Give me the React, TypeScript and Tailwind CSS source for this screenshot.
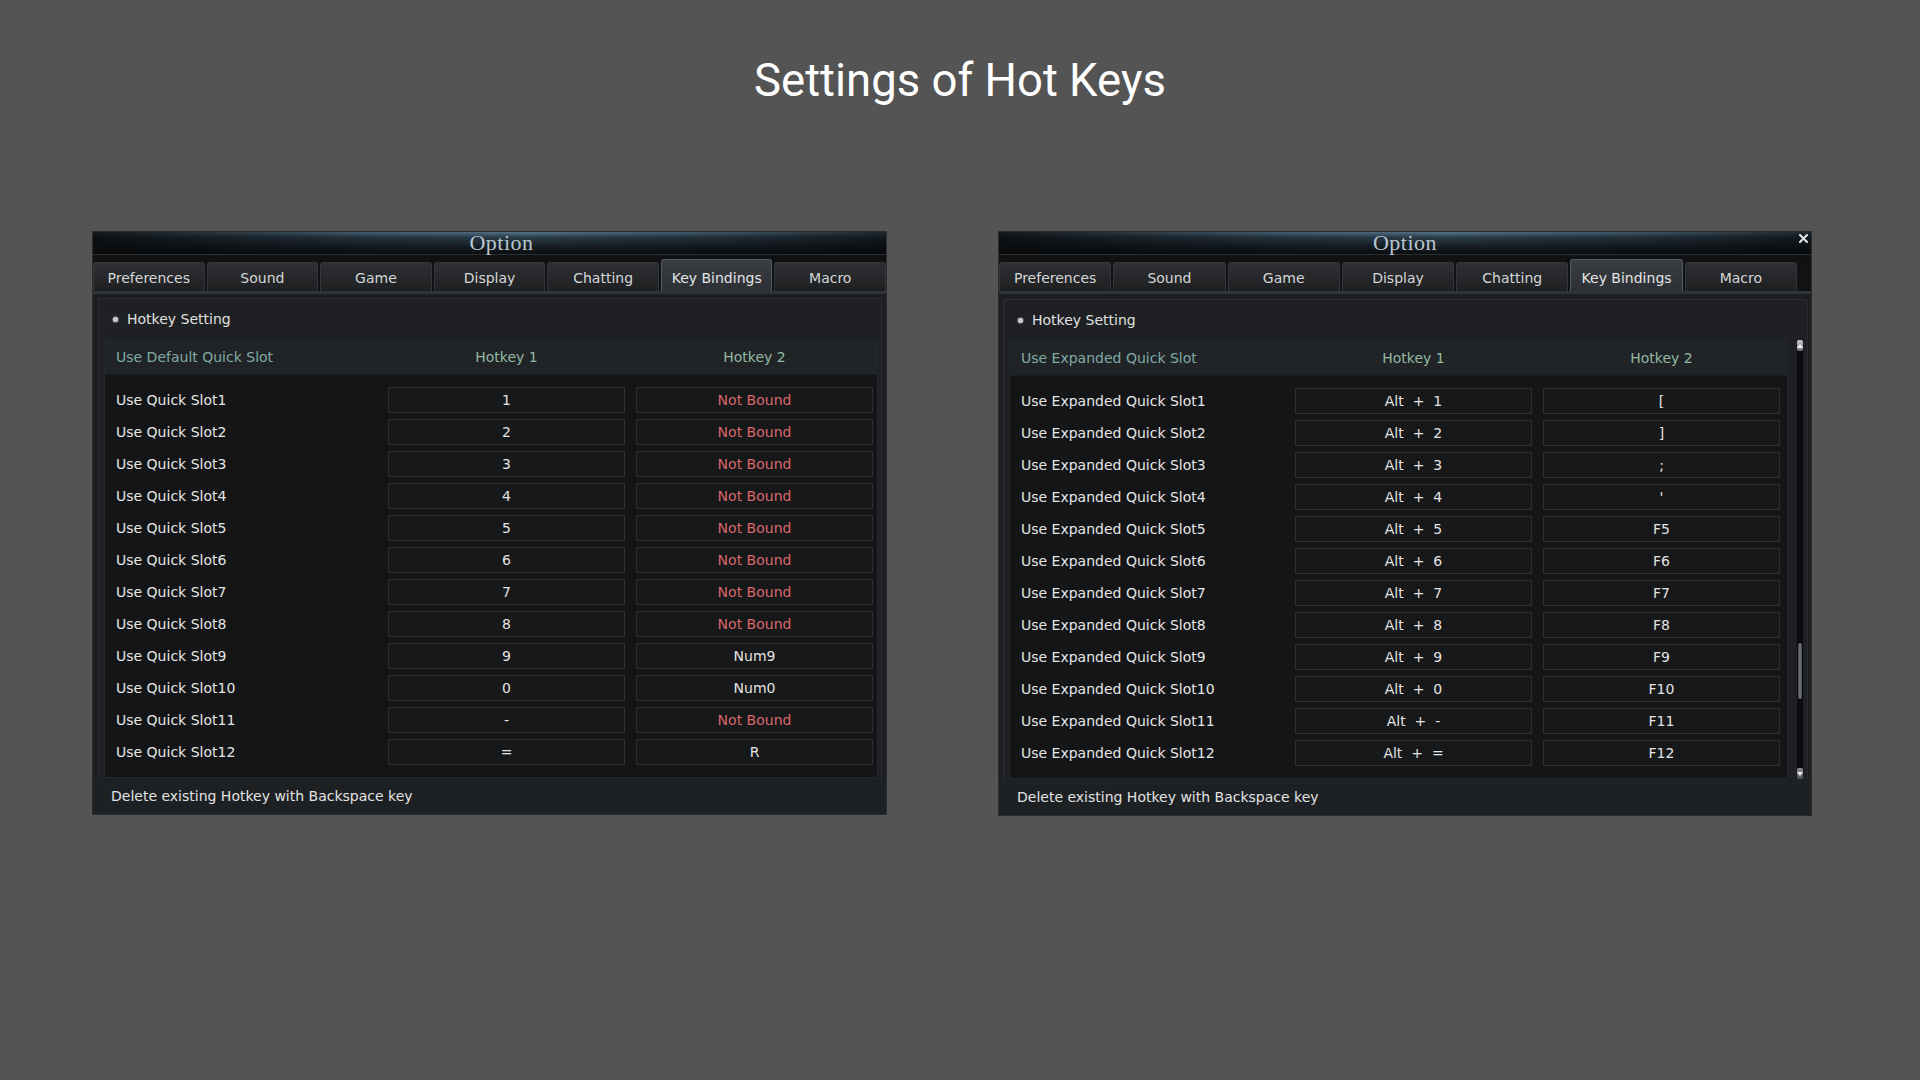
import { ReactNode } from "react"

type Binding = { label: string; key1: string; key2: string }

const TABS = [
  "Preferences",
  "Sound",
  "Game",
  "Display",
  "Chatting",
  "Key Bindings",
  "Macro",
]

const NOT_BOUND = "Not Bound"

const defaultSlots: Binding[] = [
  { label: "Use Quick Slot1", key1: "1", key2: NOT_BOUND },
  { label: "Use Quick Slot2", key1: "2", key2: NOT_BOUND },
  { label: "Use Quick Slot3", key1: "3", key2: NOT_BOUND },
  { label: "Use Quick Slot4", key1: "4", key2: NOT_BOUND },
  { label: "Use Quick Slot5", key1: "5", key2: NOT_BOUND },
  { label: "Use Quick Slot6", key1: "6", key2: NOT_BOUND },
  { label: "Use Quick Slot7", key1: "7", key2: NOT_BOUND },
  { label: "Use Quick Slot8", key1: "8", key2: NOT_BOUND },
  { label: "Use Quick Slot9", key1: "9", key2: "Num9" },
  { label: "Use Quick Slot10", key1: "0", key2: "Num0" },
  { label: "Use Quick Slot11", key1: "-", key2: NOT_BOUND },
  { label: "Use Quick Slot12", key1: "=", key2: "R" },
]

const expandedKeys = ["1", "2", "3", "4", "5", "6", "7", "8", "9", "0", "-", "="]
const expandedSecond = ["[", "]", ";", "'", "F5", "F6", "F7", "F8", "F9", "F10", "F11", "F12"]

const expandedSlots: Binding[] = expandedKeys.map((k, i) => ({
  label: `Use Expanded Quick Slot${i + 1}`,
  key1: `Alt + ${k}`,
  key2: expandedSecond[i],
}))

function TitleBar({ offset, closable }: { offset: boolean; closable: boolean }) {
  return (
    <div className="relative h-[22px] bg-[linear-gradient(180deg,#56748a_0%,#2a3c4a_25%,#141b21_70%,#0c0e10_100%)]">
      <div className="absolute inset-0 bg-[linear-gradient(90deg,rgba(8,9,10,0.85)_0%,rgba(8,9,10,0.2)_35%,rgba(8,9,10,0)_55%,rgba(8,9,10,0.3)_80%,rgba(8,9,10,0.7)_100%)]" />
      <div
        className={`relative flex h-full items-center justify-center ${offset ? "pl-[24px]" : ""}`}
      >
        <span className="font-['Liberation_Serif',serif] text-[22px] leading-none tracking-[0.5px] text-[#b9c6cf]">
          Option
        </span>
      </div>
      {closable ? (
        <svg
          className="absolute right-[3px] top-[2px]"
          width="9"
          height="9"
          viewBox="0 0 9 9"
        >
          <path d="M1 1 L8 8 M8 1 L1 8" stroke="#e4e6e8" strokeWidth="2" strokeLinecap="round" />
        </svg>
      ) : null}
    </div>
  )
}

function Tabs({ padRight }: { padRight: boolean }) {
  return (
    <div
      className={`flex h-[31px] items-end gap-[2px] border-b-[3px] border-[#303337] bg-[#101214] ${padRight ? "pr-[14px]" : ""}`}
    >
      {TABS.map((tab) => {
        const active = tab === "Key Bindings"
        return (
          <div
            key={tab}
            className={
              active
                ? "flex h-[32px] flex-1 items-center justify-center rounded-t-[3px] border border-b-0 border-[#575b60] bg-[linear-gradient(180deg,#3b3f44_0%,#2c2f33_100%)] pt-[5px] text-[#e2e4e6]"
                : "flex h-[29px] flex-1 items-center justify-center rounded-t-[3px] border border-b-0 border-[#34373a] bg-[linear-gradient(180deg,#2e3033_0%,#1d1f21_100%)] pt-[3px] text-[#d4d6d8]"
            }
          >
            {tab}
          </div>
        )
      })}
    </div>
  )
}

function KeyCell({ value }: { value: string }) {
  const unbound = value === NOT_BOUND
  return (
    <div
      className={`flex h-[26px] items-center justify-center whitespace-pre border border-[#2c2e31] bg-[#17181a] ${unbound ? "text-[#d9686c]" : "text-[#e3e3e3]"}`}
    >
      {value.replace(/ \+ /, "  +  ")}
    </div>
  )
}

function BindingTable({
  heading,
  rows,
  labelWidth,
  padRight,
}: {
  heading: string
  rows: Binding[]
  labelWidth: string
  padRight: string
}) {
  return (
    <div className="flex-1 border border-[#24272a] bg-[#141517]">
      <div
        className={`grid h-[35px] items-center gap-x-[11px] border-b border-[#1a1c1e] bg-[#212427] ${labelWidth} ${padRight}`}
      >
        <span className="pl-[11px] text-[#80aaa6]">{heading}</span>
        <span className="text-center text-[#92b9a2]">Hotkey 1</span>
        <span className="text-center text-[#92b9a2]">Hotkey 2</span>
      </div>
      <div className={`grid gap-x-[11px] py-[9px] ${labelWidth} ${padRight}`}>
        {rows.map((row) => (
          <div key={row.label} className="col-span-3 grid h-[32px] grid-cols-subgrid items-center">
            <span className="pl-[11px] text-[#e6e6e6]">{row.label}</span>
            <KeyCell value={row.key1} />
            <KeyCell value={row.key2} />
          </div>
        ))}
      </div>
    </div>
  )
}

function ScrollBar() {
  return (
    <div className="ml-[9px] flex w-[10px] flex-col">
      <div className="flex h-[11px] items-center justify-center rounded-[2px] bg-[linear-gradient(180deg,#c9cbcd,#6c6f73)]">
        <div className="h-0 w-0 border-x-[3px] border-b-[4px] border-x-transparent border-b-[#f4f4f4]" />
      </div>
      <div className="flex flex-1 flex-col bg-[#0b0c0d]">
        <div className="h-[292px]" />
        <div className="mx-[1px] h-[56px] rounded-[3px] bg-[linear-gradient(90deg,#45484c,#75787c_50%,#45484c)]" />
      </div>
      <div className="flex h-[11px] items-center justify-center rounded-[2px] bg-[linear-gradient(180deg,#8a8d90,#4e5155)]">
        <div className="h-0 w-0 border-x-[3px] border-t-[4px] border-x-transparent border-t-[#f4f4f4]" />
      </div>
    </div>
  )
}

function OptionWindow({
  width,
  heading,
  rows,
  labelWidth,
  padRight,
  expanded,
  children,
}: {
  width: string
  heading: string
  rows: Binding[]
  labelWidth: string
  padRight: string
  expanded: boolean
  children?: ReactNode
}) {
  return (
    <div
      className={`flex flex-col border border-[#2a2c2f] bg-[#1c1e21] font-['DejaVu_Sans',sans-serif] text-[14px] ${width}`}
    >
      <TitleBar offset={!expanded} closable={expanded} />
      <div className="h-[9px] border-t border-[#2a2f34] bg-[#0f1113]" />
      <Tabs padRight={expanded} />
      <div
        className={`flex flex-col ${expanded ? "pl-[4px] pr-[3px] pt-[5px]" : "pl-[5px] pr-[4px] pt-[4px]"}`}
      >
        <div className="flex flex-col rounded-t-[3px] border border-b-0 border-[#2b2e31] bg-[#1e2023] px-[5px]">
          <div className="flex h-[40px] items-center gap-[9px] pl-[9px] text-[#e0e0e0]">
            <span className="h-[5px] w-[5px] rounded-full bg-[#c8ccd0] shadow-[0_0_2px_#ffffff]" />
            <span>Hotkey Setting</span>
          </div>
          <div className="flex items-stretch">
            <BindingTable heading={heading} rows={rows} labelWidth={labelWidth} padRight={padRight} />
            {children}
          </div>
        </div>
      </div>
      <div className="flex h-[36px] items-center bg-[#1e2124] pl-[18px] text-[#e2e2e2]">
        Delete existing Hotkey with Backspace key
      </div>
    </div>
  )
}

export default function App() {
  return (
    <div className="min-h-screen w-full bg-[#545454]">
      <h1 className="pt-[54px] text-center font-['Roboto',sans-serif] text-[45.5px] font-normal leading-[54px] text-white">
        Settings of Hot Keys
      </h1>
      <div className="mt-[123px] flex items-start gap-[111px] pl-[92px]">
        <OptionWindow
          width="w-[795px]"
          heading="Use Default Quick Slot"
          rows={defaultSlots}
          labelWidth="grid-cols-[272px_237px_237px]"
          padRight="pr-[4px]"
          expanded={false}
        />
        <OptionWindow
          width="w-[814px]"
          heading="Use Expanded Quick Slot"
          rows={expandedSlots}
          labelWidth="grid-cols-[274px_237px_237px]"
          padRight="pr-[7px]"
          expanded
        >
          <ScrollBar />
        </OptionWindow>
      </div>
    </div>
  )
}
